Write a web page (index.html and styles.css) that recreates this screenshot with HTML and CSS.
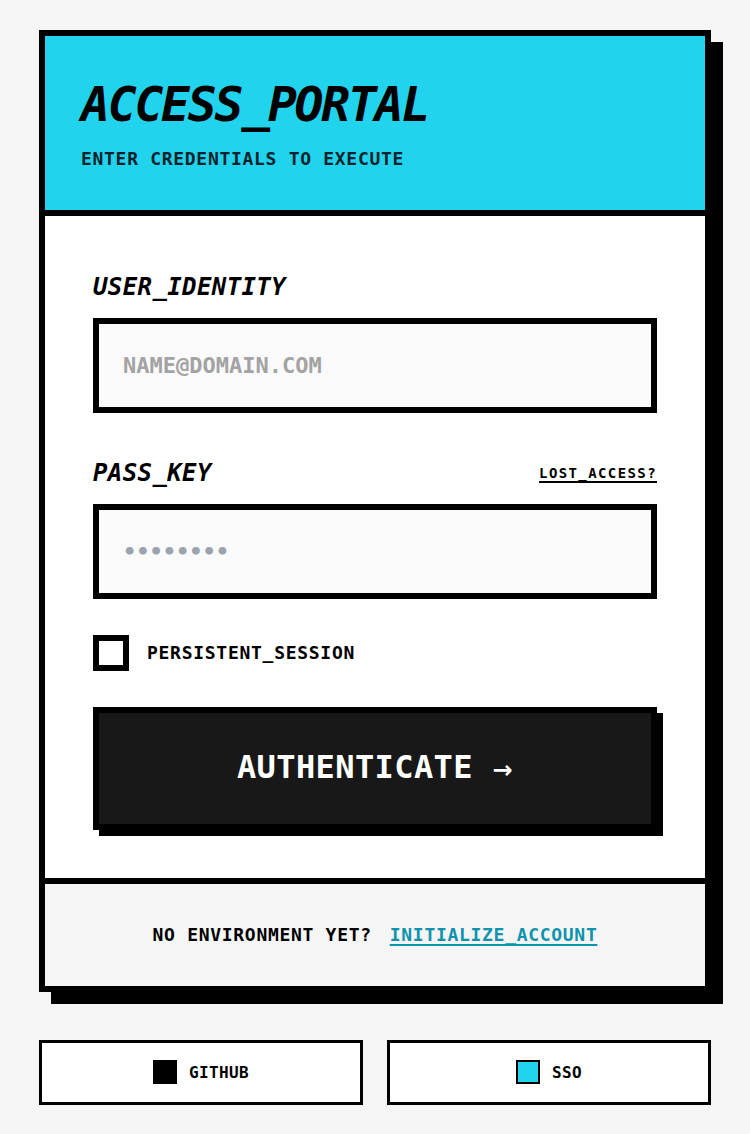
FILE: index.html
```html
<!DOCTYPE html>
<html lang="en">
<head>
<meta charset="utf-8">
<title>ACCESS_PORTAL</title>
<link rel="stylesheet" href="styles.css">
</head>
<body>
<main class="page">
  <div class="wrap">
    <section class="card">
      <header class="card-head">
        <h1 class="title">ACCESS_PORTAL</h1>
        <p class="subtitle">ENTER CREDENTIALS TO EXECUTE</p>
      </header>
      <form class="card-body">
        <div class="field">
          <div class="label-row">
            <label class="label" for="email">USER_IDENTITY</label>
          </div>
          <input class="input input-email" id="email" type="text" placeholder="NAME@DOMAIN.COM">
        </div>
        <div class="field">
          <div class="label-row">
            <label class="label" for="pass">PASS_KEY</label>
            <a class="lost" href="#">LOST_ACCESS?</a>
          </div>
          <input class="input input-pass" id="pass" type="password" placeholder="••••••••">
        </div>
        <label class="check-row">
          <input class="check" type="checkbox">
          <span class="check-text">PERSISTENT_SESSION</span>
        </label>
        <button class="submit" type="button">AUTHENTICATE <span class="arrow">→</span></button>
      </form>
      <footer class="card-foot">
        <span class="foot-text">NO ENVIRONMENT YET?</span>
        <a class="foot-link" href="#">INITIALIZE_ACCOUNT</a>
      </footer>
    </section>
    <div class="alt">
      <button class="alt-btn" type="button"><span class="sq sq-black"></span><span class="alt-text">GITHUB</span></button>
      <button class="alt-btn" type="button"><span class="sq sq-cyan"></span><span class="alt-text">SSO</span></button>
    </div>
  </div>
</main>
</body>
</html>
```

FILE: styles.css
```css
* { box-sizing: border-box; }
html, body { margin: 0; padding: 0; }
body {
  background: #f5f5f5;
  font-family: "DejaVu Sans Mono", "Liberation Mono", monospace;
  color: #000;
}
.page {
  min-height: 100vh;
  display: flex;
  align-items: center;
  justify-content: center;
}
.wrap {
  width: 672px;
  display: flex;
  flex-direction: column;
  gap: 48px;
}
.card {
  background: #fff;
  border: 6px solid #000;
  box-shadow: 12px 12px 0 #000;
}
.card-head {
  background: #22d3ee;
  border-bottom: 6px solid #000;
  padding: 44px 36px 39px;
}
.title {
  margin: 0 0 19px;
  font-size: 48px;
  line-height: 48px;
  font-weight: 700;
  font-style: oblique;
  letter-spacing: -2.2px;
}
.subtitle {
  margin: 0;
  font-size: 18px;
  line-height: 24px;
  font-weight: 700;
  letter-spacing: 0.7px;
  color: #06232b;
}
.card-body {
  padding: 55px 48px 48px;
  display: flex;
  flex-direction: column;
  margin: 0;
}
.field { margin-bottom: 44px; }
.field + .field { margin-bottom: 36px; }
.label-row {
  display: flex;
  justify-content: space-between;
  align-items: center;
  margin-bottom: 15px;
}
.label {
  font-size: 24px;
  line-height: 32px;
  font-weight: 700;
  font-style: oblique;
  letter-spacing: 0.4px;
}
.lost {
  font-size: 14px;
  line-height: 20px;
  font-weight: 700;
  letter-spacing: 1.4px;
  color: #000;
  text-decoration: underline;
  text-underline-offset: 3px;
  text-decoration-thickness: 2px;
}
.input {
  display: block;
  width: 100%;
  margin: 0;
  border: 6px solid #000;
  border-radius: 0;
  background: #fafafa;
  padding: 25px 24px;
  font-family: "DejaVu Sans Mono", "Liberation Mono", monospace;
  font-size: 22px;
  line-height: 33px;
  font-weight: 700;
  color: #000;
  outline: none;
}
.input-email::placeholder { color: #a3a3a3; opacity: 1; }
.input-pass::placeholder { color: #9ca3af; opacity: 1; }
.check-row {
  display: flex;
  align-items: center;
  gap: 18px;
  margin-bottom: 36px;
  cursor: pointer;
}
.check {
  appearance: none;
  -webkit-appearance: none;
  width: 36px;
  height: 36px;
  margin: 0;
  border: 6px solid #000;
  border-radius: 0;
  background: #fff;
}
.check-text {
  font-size: 18px;
  line-height: 24px;
  font-weight: 700;
  letter-spacing: 0.72px;
}
.submit {
  display: block;
  width: 100%;
  margin: 0;
  border: 6px solid #000;
  border-radius: 0;
  background: #181818;
  box-shadow: 6px 6px 0 #000;
  color: #fff;
  padding: 34px 0;
  font-family: "DejaVu Sans Mono", "Liberation Mono", monospace;
  font-size: 32px;
  line-height: 40px;
  font-weight: 700;
  letter-spacing: 0.4px;
  cursor: pointer;
}
.arrow {
  font-family: "DejaVu Sans", sans-serif;
  font-weight: 700;
  font-size: 24px;
}
.card-foot {
  background: #f5f5f5;
  border-top: 6px solid #000;
  padding: 37px 24px;
  display: flex;
  justify-content: center;
  align-items: center;
  gap: 18px;
  font-size: 18px;
  line-height: 28px;
  font-weight: 700;
  letter-spacing: 0.7px;
}
.foot-link {
  color: #0e93ad;
  text-decoration: underline;
  text-underline-offset: 3px;
  text-decoration-thickness: 2px;
}
.alt {
  display: grid;
  grid-template-columns: 1fr 1fr;
  gap: 24px;
}
.alt-btn {
  height: 65px;
  margin: 0;
  border: 3px solid #000;
  border-radius: 0;
  background: #fff;
  display: flex;
  align-items: center;
  justify-content: center;
  gap: 12px;
  font-family: "DejaVu Sans Mono", "Liberation Mono", monospace;
  font-size: 16px;
  font-weight: 700;
  letter-spacing: 0.4px;
  color: #000;
  cursor: pointer;
}
.sq {
  width: 24px;
  height: 24px;
  display: block;
}
.sq-black { background: #000; }
.sq-cyan { background: #22d3ee; border: 2px solid #000; }
```
